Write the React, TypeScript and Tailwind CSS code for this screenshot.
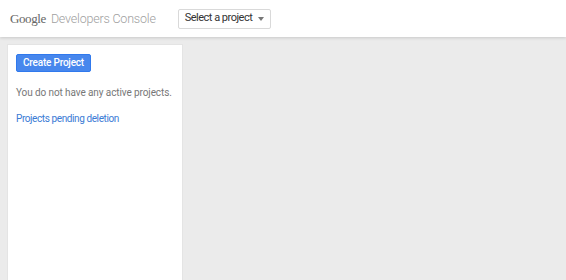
import React from 'react';

const font = { fontFamily: 'Roboto, "Liberation Sans", Arial, sans-serif' };

export default function App() {
  return (
    <div className="w-[566px] h-[280px] bg-[#ebebeb] flex flex-col overflow-hidden" style={font}>
      {/* top bar */}
      <div className="h-[37px] bg-white flex items-center shrink-0 shadow-[0_1px_3px_rgba(0,0,0,0.15)] relative z-10">
        <div className="pl-[10px] flex items-baseline whitespace-nowrap">
          <span className="text-[13px] text-[#666] tracking-[-0.4px]" style={{ fontFamily: '"Liberation Serif", serif' }}>Google</span>
          <span className="ml-[5px] text-[12.5px] font-light tracking-[-0.2px] text-[#a0a0a0]">Developers Console</span>
        </div>
        <div className="ml-[22px] h-[20px] w-[93px] border border-[#d9d9d9] rounded-[2px] flex items-center pl-[6px] text-[11px] tracking-[-0.5px] text-[#333] whitespace-nowrap">
          Select a project
          <span className="ml-[6px] w-0 h-0 border-l-[3.5px] border-r-[3.5px] border-t-[4px] border-l-transparent border-r-transparent border-t-[#777]" />
        </div>
      </div>
      {/* body */}
      <div className="flex-1 flex pt-[7px] pl-[7px]">
        <div className="w-[176px] bg-white border border-[#e4e4e4] border-b-0 pt-[9px] pl-[8px] flex flex-col items-start">
          <button className="h-[18px] px-[6px] bg-[#4787ed] border border-[#3079ed] rounded-[2px] text-white text-[10px] tracking-[-0.2px] font-medium leading-none">
            Create Project
          </button>
          <p className="mt-[14px] text-[10px] leading-[14px] tracking-[-0.1px] text-[#777] whitespace-nowrap">You do not have any active projects.</p>
          <p className="mt-[12px] text-[10px] leading-[14px] tracking-[-0.4px] text-[#3a7bd5] whitespace-nowrap">Projects pending deletion</p>
        </div>
      </div>
    </div>
  );
}
